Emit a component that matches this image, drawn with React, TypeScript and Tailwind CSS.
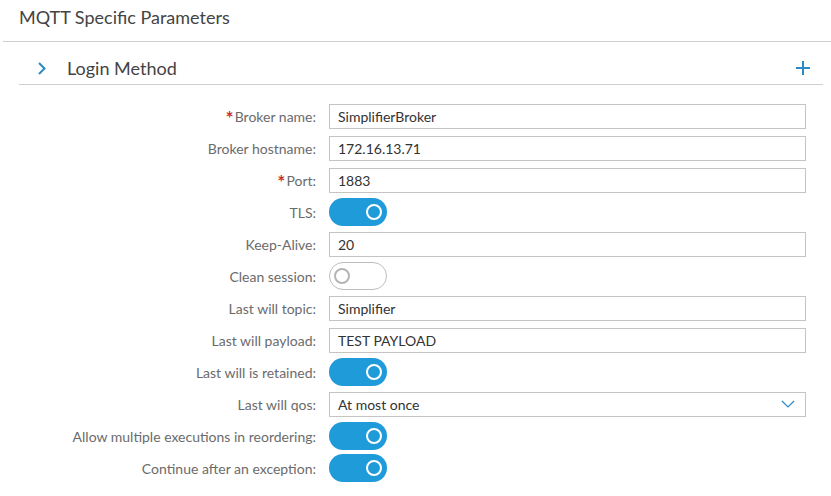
import React from "react";

const font = { fontFamily: "Lato, 'Open Sans', sans-serif" };

function Toggle({ on }: { on: boolean }) {
  return on ? (
    <div className="relative w-[58px] h-[28px] rounded-full bg-[#1f9bd9]">
      <div className="absolute top-[6px] left-[37px] w-[16px] h-[16px] rounded-full border-2 border-white" />
    </div>
  ) : (
    <div className="relative w-[58px] h-[28px] rounded-full bg-white border border-[#bdbdbd]">
      <div className="absolute top-[5px] left-[4px] w-[16px] h-[16px] rounded-full border-2 border-[#b5b5b5]" />
    </div>
  );
}

function Input({ value, select }: { value: string; select?: boolean }) {
  return (
    <div className="h-[25px] w-full border border-[#c4c4c4] bg-white flex items-center pl-[8px] pr-[10px] text-[14px] text-[#333]">
      <span className="flex-1">{value}</span>
      {select && (
        <svg width="14" height="8" viewBox="0 0 14 8" fill="none">
          <path d="M1 1 L7 7 L13 1" stroke="#2a8ac4" strokeWidth="1.2" />
        </svg>
      )}
    </div>
  );
}

type Row = { label: string; req?: boolean; value?: string; toggle?: boolean; select?: boolean };

const rows: Row[] = [
  { label: "Broker name:", req: true, value: "SimplifierBroker" },
  { label: "Broker hostname:", value: "172.16.13.71" },
  { label: "Port:", req: true, value: "1883" },
  { label: "TLS:", toggle: true },
  { label: "Keep-Alive:", value: "20" },
  { label: "Clean session:", toggle: false },
  { label: "Last will topic:", value: "Simplifier" },
  { label: "Last will payload:", value: "TEST PAYLOAD" },
  { label: "Last will is retained:", toggle: true },
  { label: "Last will qos:", value: "At most once", select: true },
  { label: "Allow multiple executions in reordering:", toggle: true },
  { label: "Continue after an exception:", toggle: true },
];

export default function App() {
  return (
    <div className="w-[831px] h-[496px] bg-white overflow-hidden" style={font}>
      <div className="ml-[3px] h-[42px] border-b border-[#cfcfcf] flex items-center pl-[16px] pb-[6px]">
        <span className="text-[18px] text-[#444]">MQTT Specific Parameters</span>
      </div>
      <div className="ml-[19px] mr-[8px]">
        <div className="h-[43px] pt-[10px] border-b border-[#cfcfcf] flex items-center">
          <svg className="ml-[19px]" width="8" height="13" viewBox="0 0 8 13" fill="none">
            <path d="M1 1 L6.5 6.5 L1 12" stroke="#2a8ac4" strokeWidth="2" />
          </svg>
          <span className="ml-[21px] text-[18px] text-[#444] flex-1">Login Method</span>
          <svg className="mr-[13px]" width="14" height="14" viewBox="0 0 14 14" fill="none">
            <path d="M7 0 V14 M0 7 H14" stroke="#2a8ac4" strokeWidth="2" />
          </svg>
        </div>
        <div className="pt-[15px] pr-[17px] grid grid-cols-[297px_1fr] gap-x-[13px]">
          {rows.map((r, i) => (
            <React.Fragment key={i}>
              <div className="h-[32px] flex items-center justify-end text-[14px] text-[#6b6b6b]">
                {r.req && (
                  <span className="text-[#c9302c] text-[19px] font-bold leading-none mt-[2px] mr-[1px]">*</span>
                )}
                {r.label}
              </div>
              <div className="h-[32px] flex items-center">
                {r.toggle !== undefined ? <Toggle on={r.toggle} /> : <Input value={r.value!} select={r.select} />}
              </div>
            </React.Fragment>
          ))}
        </div>
      </div>
    </div>
  );
}
